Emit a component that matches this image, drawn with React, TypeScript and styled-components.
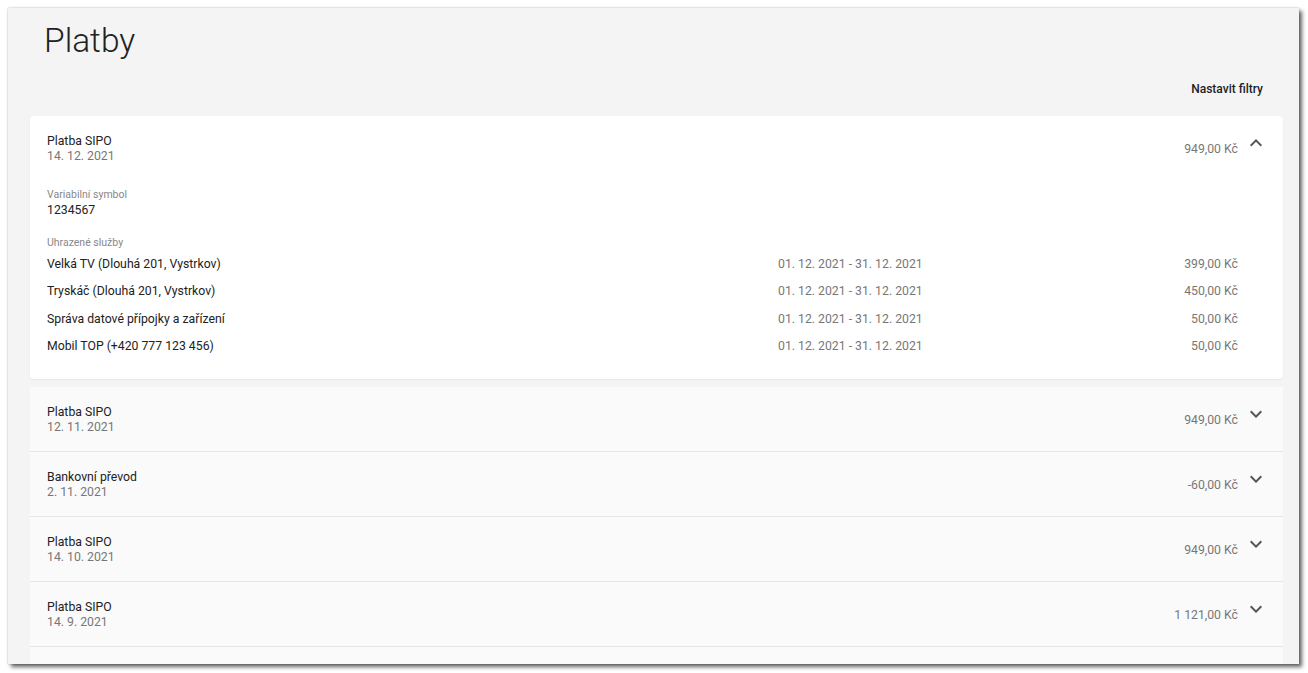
import React from "react";
import styled, { createGlobalStyle } from "styled-components";

const Global = createGlobalStyle`
  html, body { margin: 0; padding: 0; background: #ffffff; }
  body { font-family: Roboto, "Noto Sans", Arial, sans-serif; -webkit-font-smoothing: antialiased; }
  * { box-sizing: border-box; }
`;

const Page = styled.div`
  padding: 8px;
`;

const Frame = styled.div`
  width: 1291px;
  height: 656px;
  overflow: hidden;
  background: #f4f4f4;
  box-shadow: 0 0 2px rgba(0, 0, 0, 0.25), 3px 3px 4px rgba(0, 0, 0, 0.6);
  padding: 0 16px 0 22px;
`;

const Title = styled.h1`
  margin: 13px 0 0 14px;
  font-size: 33.5px;
  line-height: 40px;
  font-weight: 300;
  color: #222;
`;

const FilterBar = styled.div`
  display: flex;
  justify-content: flex-end;
  padding: 20px 20px 0 0;
  height: 55px;
`;

const FilterLink = styled.a`
  font-size: 12px;
  line-height: 16px;
  font-weight: 500;
  color: #222;
  cursor: pointer;
`;

const List = styled.div`
  display: flex;
  flex-direction: column;
`;

const Card = styled.div<{ $open?: boolean }>`
  background: ${(p) => (p.$open ? "#ffffff" : "#fafafa")};
  border-radius: ${(p) => (p.$open ? "4px" : "0")};
  box-shadow: ${(p) => (p.$open ? "0 1px 2px rgba(0,0,0,0.06)" : "none")};
  margin-bottom: ${(p) => (p.$open ? "8px" : "0")};
  border-bottom: ${(p) => (p.$open ? "none" : "1px solid #e6e6e6")};
  padding: ${(p) => (p.$open ? "18px 15px 19px 17px" : "18px 15px 17px 17px")};
`;

const Header = styled.div`
  display: flex;
  align-items: center;
`;

const HeadText = styled.div`
  flex: 1;
  display: flex;
  flex-direction: column;
`;

const Name = styled.div`
  font-size: 12.25px;
  line-height: 15px;
  color: #222;
`;

const Sub = styled.div`
  font-size: 12.25px;
  line-height: 14px;
  color: #777;
`;

const Amount = styled.div`
  font-size: 12.25px;
  line-height: 16px;
  color: #777;
  margin-right: 6px;
`;

const Chevron = styled.svg`
  width: 24px;
  height: 24px;
  align-self: flex-start;
  margin-top: -3px;
  fill: #555;
  flex: none;
`;

const Details = styled.div`
  padding: 25px 30px 0 0;
`;

const Label = styled.div`
  font-size: 10.5px;
  line-height: 14px;
  color: #888;
`;

const Value = styled.div`
  font-size: 12.25px;
  line-height: 16px;
  color: #222;
  margin-bottom: 18px;
`;

const ServiceRow = styled.div`
  display: grid;
  grid-template-columns: 731px 1fr auto;
  align-items: center;
  height: 27.5px;
  font-size: 12.25px;
  color: #222;
`;

const Period = styled.span`
  color: #777;
`;

const Price = styled.span`
  color: #777;
  text-align: right;
`;

const ChevronIcon = ({ up }: { up?: boolean }) => (
  <Chevron viewBox="0 0 24 24">
    {up ? (
      <path d="M12 8l-6 6 1.41 1.41L12 10.83l4.59 4.58L18 14z" />
    ) : (
      <path d="M16.59 8.59L12 13.17 7.41 8.59 6 10l6 6 6-6z" />
    )}
  </Chevron>
);

const services = [
  { name: "Velká TV (Dlouhá 201, Vystrkov)", price: "399,00 Kč" },
  { name: "Tryskáč (Dlouhá 201, Vystrkov)", price: "450,00 Kč" },
  { name: "Správa datové přípojky a zařízení", price: "50,00 Kč" },
  { name: "Mobil TOP (+420 777 123 456)", price: "50,00 Kč" },
];

const payments = [
  { name: "Platba SIPO", date: "12. 11. 2021", amount: "949,00 Kč" },
  { name: "Bankovní převod", date: "2. 11. 2021", amount: "-60,00 Kč" },
  { name: "Platba SIPO", date: "14. 10. 2021", amount: "949,00 Kč" },
  { name: "Platba SIPO", date: "14. 9. 2021", amount: "1 121,00 Kč" },
];

export default function App() {
  return (
    <>
      <Global />
      <Page>
        <Frame>
          <Title>Platby</Title>
          <FilterBar>
            <FilterLink>Nastavit filtry</FilterLink>
          </FilterBar>
          <List>
            <Card $open>
              <Header>
                <HeadText>
                  <Name>Platba SIPO</Name>
                  <Sub>14. 12. 2021</Sub>
                </HeadText>
                <Amount>949,00 Kč</Amount>
                <ChevronIcon up />
              </Header>
              <Details>
                <Label>Variabilní symbol</Label>
                <Value>1234567</Value>
                <Label>Uhrazené služby</Label>
                {services.map((s) => (
                  <ServiceRow key={s.name}>
                    <span>{s.name}</span>
                    <Period>01. 12. 2021 - 31. 12. 2021</Period>
                    <Price>{s.price}</Price>
                  </ServiceRow>
                ))}
              </Details>
            </Card>
            {payments.map((p, i) => (
              <Card key={i}>
                <Header>
                  <HeadText>
                    <Name>{p.name}</Name>
                    <Sub>{p.date}</Sub>
                  </HeadText>
                  <Amount>{p.amount}</Amount>
                  <ChevronIcon />
                </Header>
              </Card>
            ))}
            <Card />
          </List>
        </Frame>
      </Page>
    </>
  );
}
